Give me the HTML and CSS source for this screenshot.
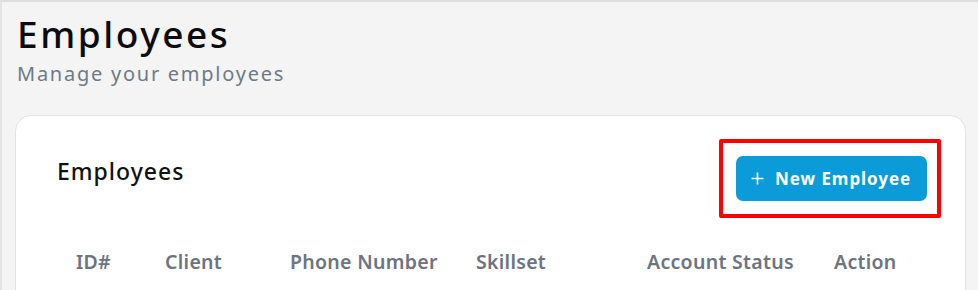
FILE: index.html
```html
<!DOCTYPE html>
<html lang="en">
<head>
<meta charset="utf-8">
<title>Employees</title>
<link rel="stylesheet" href="styles.css">
</head>
<body>
<div class="page">
  <header class="page-head">
    <h1 class="page-title">Employees</h1>
    <p class="page-sub">Manage your employees</p>
  </header>
  <section class="card">
    <div class="card-head">
      <h2 class="card-title">Employees</h2>
      <div class="highlight">
        <button class="btn-primary" type="button">
          <svg class="plus" width="13" height="13" viewBox="0 0 13 13" aria-hidden="true"><path d="M6.5 0.5v12M0.5 6.5h12" stroke="#fff" stroke-width="1.6" fill="none"/></svg>
          <span>New Employee</span>
        </button>
      </div>
    </div>
    <div class="table-head">
      <div class="th">ID#</div>
      <div class="th">Client</div>
      <div class="th">Phone Number</div>
      <div class="th">Skillset</div>
      <div class="th">Account Status</div>
      <div class="th">Action</div>
    </div>
  </section>
</div>
</body>
</html>
```
FILE: styles.css
```css
* { box-sizing: border-box; }
html, body { margin: 0; padding: 0; }
body {
  background: #f4f4f4;
  font-family: "Noto Sans", "Open Sans", sans-serif;
  width: 978px;
  height: 290px;
  overflow: hidden;
}
.page {
  border-top: 2px solid #dedede;
  border-left: 2px solid #e4e4e4;
  height: 290px;
  padding: 0 12px 0 13px;
}
.page-head {
  padding: 7px 0 0 2px;
}
.page-title {
  margin: 0;
  font-size: 37px;
  font-weight: 500;
  color: #0c0c0c;
  line-height: 50px;
  letter-spacing: 2.55px;
}
.page-sub {
  margin: 0;
  font-size: 20px;
  color: #6e7a86;
  line-height: 30px;
  letter-spacing: 1.75px;
}
.card {
  margin-top: 26px;
  background: #fff;
  border: 1px solid #e3e3e3;
  border-radius: 16px;
  height: 300px;
}
.card-head {
  display: flex;
  justify-content: space-between;
  align-items: flex-start;
  padding: 23px 24px 0 41px;
}
.card-title {
  margin: 0;
  padding-top: 16px;
  font-size: 23px;
  line-height: 32px;
  font-weight: 500;
  color: #111;
  letter-spacing: 1px;
}
.highlight {
  border: 4px solid #ff0000;
  border-radius: 2px;
  padding: 13px 10px 13px 13px;
}
.btn-primary {
  display: flex;
  align-items: center;
  gap: 11px;
  width: 191px;
  height: 45px;
  padding: 0 0 0 15px;
  background: #0b9bd8;
  border: 0;
  border-radius: 7px;
  color: #fff;
  font-family: "Noto Sans", sans-serif;
  font-size: 17px;
  font-weight: 700;
  letter-spacing: 0.95px;
}
.table-head {
  display: grid;
  grid-template-columns: 89px 125px 186px 171px 187px auto;
  padding: 30px 0 0 60px;
}
.th {
  font-size: 19.5px;
  font-weight: 600;
  color: #6c7480;
  line-height: 28px;
  letter-spacing: 0.3px;
}
```
